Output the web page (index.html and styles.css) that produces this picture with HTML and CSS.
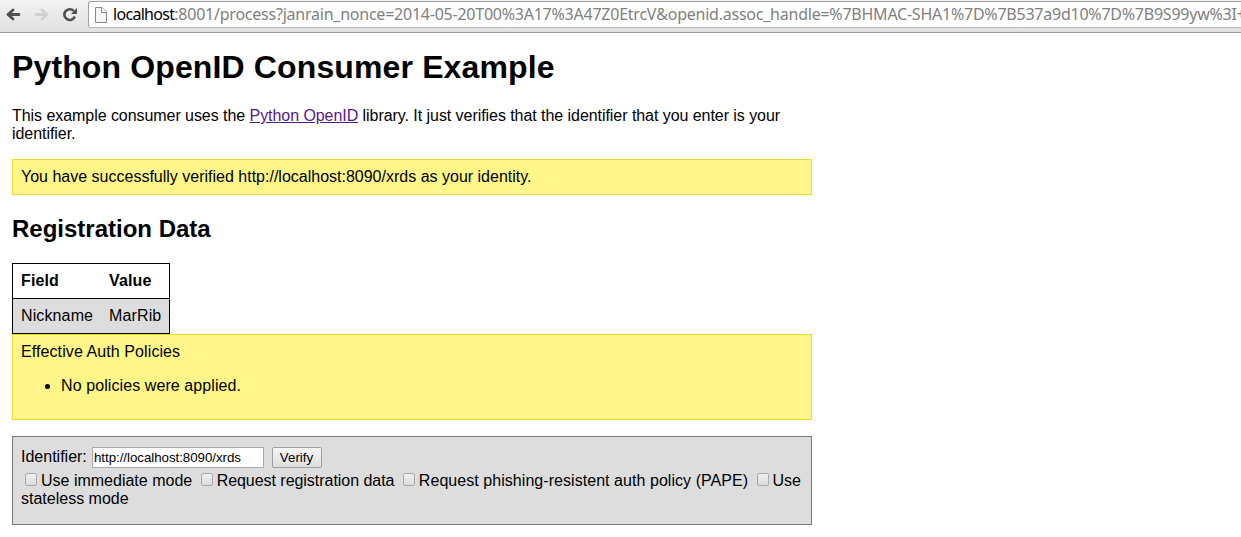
FILE: index.html
```
<!DOCTYPE html>
<html lang="en">
<head>
<meta charset="utf-8">
<title>Python OpenID Consumer Example</title>
<link rel="stylesheet" href="styles.css">
</head>
<body>
<header class="toolbar">
  <svg class="nav" width="92" height="32" viewBox="0 0 92 32" fill="none" stroke-linecap="round" stroke-linejoin="round">
    <path d="M8.500 14.500H19M13 10L8 14.500L13 19" stroke="#505050" stroke-width="2.800"/>
    <path d="M36 14.500H46.500M42 10L47 14.500L42 19" stroke="#d0d0d0" stroke-width="2.800"/>
    <path d="M73.800 11A5.400 5.400 0 1 0 74.800 16.500" stroke="#505050" stroke-width="2.600" stroke-linecap="butt"/>
    <path d="M77 8V14H71Z" fill="#505050"/>
  </svg>
  <div class="address">
    <svg class="page-icon" width="12" height="16" viewBox="0 0 12 16"><path d="M.5 .5H7L11.500 5V15.500H.5Z" fill="#f5f5f5" stroke="#888"/><path d="M6.500 .5V5.500H11.500" fill="#fff" stroke="#888"/></svg>
    <div class="url"><span class="host">localhost</span><span class="path">:8001/process?janrain_nonce=2014-05-20T00%3A17%3A47Z0EtrcV&amp;openid.assoc_handle=%7BHMAC-SHA1%7D%7B537a9d10%7D%7B9S99yw%3I+</span></div>
  </div>
</header>
<main class="content">
  <h1>Python OpenID Consumer Example</h1>
  <p>This example consumer uses the <a class="link" href="#">Python OpenID</a> library. It just verifies that the identifier that you enter is your identifier.</p>
  <div class="alert">You have successfully verified http://localhost:8090/xrds as your identity.</div>
  <h2>Registration Data</h2>
  <table class="registration">
    <thead><tr><th>Field</th><th>Value</th></tr></thead>
    <tbody><tr><td>Nickname</td><td>MarRib</td></tr></tbody>
  </table>
  <div class="alert policies">Effective Auth Policies<ul><li>No policies were applied.</li></ul></div>
  <form class="verify">
    <div class="row"><label for="identifier">Identifier:</label><input class="field" id="identifier" type="text" value="http://localhost:8090/xrds"><button class="submit" type="button">Verify</button></div>
    <div class="options"><input class="check" type="checkbox" id="a"><label for="a">Use immediate mode</label>
    <input class="check" type="checkbox" id="b"><label class="tight" for="b">Request registration data</label>
    <input class="check" type="checkbox" id="c"><label class="loose" for="c">Request phishing-resistent auth policy (PAPE)</label>
    <input class="check" type="checkbox" id="d"><label for="d">Use stateless mode</label></div>
  </form>
</main>
</body>
</html>
```
FILE: styles.css
```
* { box-sizing: border-box; }
body { margin: 0; background: #fff; color: #000; font: 16px/18px "Liberation Sans", Arial, sans-serif; overflow: hidden; }
.toolbar { display: flex; height: 33px; background: linear-gradient(#f2f2f2, #e1e1e1); border-bottom: 1px solid #989898; overflow: hidden; }
.nav { flex: none; margin-right: -4px; }
.address { flex: none; display: flex; width: 1170px; height: 27px; margin-top: 1px; padding: 5px 0 0 6px; background: #fff; border: 1px solid #a0a0a0; border-bottom-color: #bbb; border-radius: 3px; }
.page-icon { flex: none; margin-right: 6px; }
.url { font: 16px/18px "Noto Sans", sans-serif; white-space: nowrap; margin-top: -2px; color: #808080; }
.host { color: #000; letter-spacing: -.7px; }
.path { letter-spacing: -.235px; }
.content { width: 800px; margin-left: 12px; padding-top: 16px; }
h1 { margin: 0 0 21px; font-size: 32px; line-height: 37px; letter-spacing: .13px; }
p { margin: 0 0 16px; letter-spacing: -.055px; }
.link { color: #551a8b; }
.alert { padding: 8px; background: #fff68a; border: 1px solid #e6dc35; }
.policies { letter-spacing: .09px; }
h2 { margin: 20px 0; font-size: 24px; line-height: 28px; }
.registration { width: 158px; border-collapse: collapse; border: 1px solid #000; letter-spacing: .12px; }
th, td { padding: 8px; text-align: left; border-top: 1px solid #000; }
td { background: #ddd; }
ul { margin: 16px 0; padding-left: 40px; }
.verify { height: 89px; margin-top: 16px; padding: 10px 8px 8px; background: #ddd; border: 1px solid #777; }
.row { display: flex; height: 25px; }
.row label { width: 71px; padding-top: 1px; }
.field { width: 172px; height: 21px; padding: 1px; border: 1px solid #aaa; background: #fff; color: #000; font: 13.333px "Liberation Sans", Arial, sans-serif; letter-spacing: -.05px; }
.submit { width: 50px; height: 21px; margin-left: 8px; padding: 0 1px 0 0; border: 1px solid #a0a0a0; border-radius: 2px; background: linear-gradient(#f6f6f6, #dedede); color: #000; font: 13.333px "Liberation Sans", Arial, sans-serif; }
.tight { letter-spacing: -.04px; }
.loose { letter-spacing: .05px; }
.check { appearance: none; width: 12px; height: 13px; margin: 0 4px; vertical-align: 0; border: 1px solid #aaa; border-radius: 2px; background: linear-gradient(#eee, #dcdcdc); }
```
